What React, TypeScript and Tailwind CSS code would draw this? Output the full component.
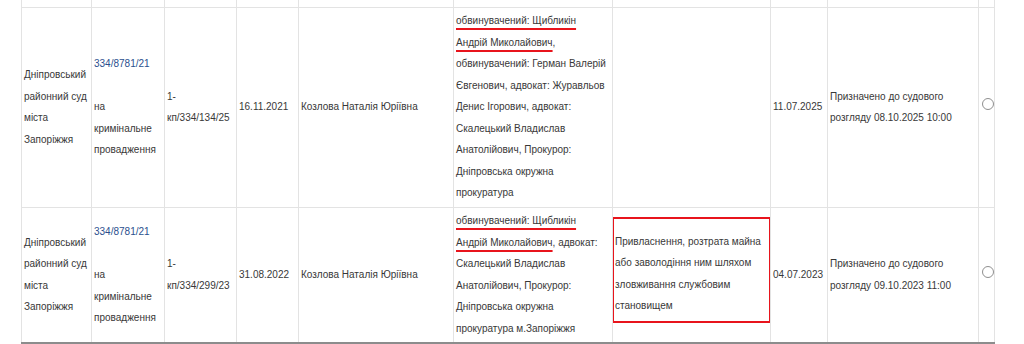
import { ReactNode } from "react";

type CaseRow = {
  court: string[];
  caseNumber: string;
  proceeding: string[];
  date: string;
  judge: string;
  parties: ReactNode;
  essence: string[] | null;
  registered: string;
  status: string[];
};

const cellCls = "border border-[#e3e3e3] align-middle px-[2px] py-0";
const markCls = "underline decoration-[#e8141c] decoration-2 underline-offset-[4px] [text-decoration-skip-ink:none]";

const rows: CaseRow[] = [
  {
    court: ["Дніпровський", "районний суд", "міста", "Запоріжжя"],
    caseNumber: "334/8781/21",
    proceeding: ["1-", "кп/334/134/25"],
    date: "16.11.2021",
    judge: "Козлова Наталія Юріївна",
    parties: (
      <>
        <span className={markCls}>обвинувачений: Щибликін</span><br/>
        <span className={markCls}>Андрій Миколайович</span>,<br/>
        обвинувачений: Герман Валерій<br/>
        Євгенович, адвокат: Журавльов<br/>
        Денис Ігорович, адвокат:<br/>
        Скалецький Владислав<br/>
        Анатолійович, Прокурор:<br/>
        Дніпровська окружна<br/>
        прокуратура
      </>
    ),
    essence: null,
    registered: "11.07.2025",
    status: ["Призначено до судового", "розгляду 08.10.2025 10:00"]
  },
  {
    court: ["Дніпровський", "районний суд", "міста", "Запоріжжя"],
    caseNumber: "334/8781/21",
    proceeding: ["1-", "кп/334/299/23"],
    date: "31.08.2022",
    judge: "Козлова Наталія Юріївна",
    parties: (
      <>
        <span className={markCls}>обвинувачений: Щибликін</span><br/>
        <span className={markCls}>Андрій Миколайович</span>, адвокат:<br/>
        Скалецький Владислав<br/>
        Анатолійович, Прокурор:<br/>
        Дніпровська окружна<br/>
        прокуратура м.Запоріжжя
      </>
    ),
    essence: ["Привласнення, розтрата майна", "або заволодіння ним шляхом", "зловживання службовим", "становищем"],
    registered: "04.07.2023",
    status: ["Призначено до судового", "розгляду 09.10.2023 11:00"]
  }
];

function Lines({lines}: {lines: string[]}) {
  return (
    <>
      {lines.map((line, i)=>(
        <span key={i}>{line}{i < lines.length - 1 && <br/>}</span>
      ))}
    </>
  );
}

export default function App() {
  const widths = [70, 73, 72, 62, 155, 159, 158, 57, 151, 16];

  return (
    <div className="w-[1024px] h-[344px] overflow-hidden bg-white font-['Liberation_Sans',Arial,sans-serif] text-[10px] leading-[21.5px] text-[#383838] whitespace-nowrap">
      <table className="ml-[21px] w-[973px] table-fixed border-collapse">
        <colgroup>
          {widths.map((w, i)=><col key={i} style={{width: w}} />)}
        </colgroup>
        <tbody>
          {/* tail of the previous row */}
          <tr className="h-[7px]">
            {widths.map((_, i)=><td key={i} className="border-x border-b border-[#e3e3e3] p-0"></td>)}
          </tr>
          {rows.map((row, r)=>{
            const last = r === rows.length - 1;
            const bottom = last ? " border-b-2 border-b-[#8c8c8c]" : "";
            return (
              <tr key={r} className={r === 0 ? "h-[200px]" : "h-[136px]"}>
                <td className={cellCls + bottom}><Lines lines={row.court} /></td>
                <td className={cellCls + bottom}>
                  <a className="text-[#2b4f8e]">{row.caseNumber}</a><br/><br/>
                  на<br/>кримінальне<br/>провадження
                </td>
                <td className={cellCls + bottom}><Lines lines={row.proceeding} /></td>
                <td className={cellCls + bottom}>{row.date}</td>
                <td className={cellCls + bottom}>{row.judge}</td>
                <td className={cellCls + bottom}>{row.parties}</td>
                {row.essence ? (
                  <td className={"border border-[#e3e3e3] align-top p-0 pt-[9px]" + bottom}>
                    <div className="-mx-[1px] border-2 border-[#e8141c] pl-[1px] pt-[12px] pb-[4px]">
                      <Lines lines={row.essence} />
                    </div>
                  </td>
                ) : (
                  <td className={cellCls + bottom}></td>
                )}
                <td className={cellCls + bottom}>{row.registered}</td>
                <td className={cellCls + bottom}><Lines lines={row.status} /></td>
                <td className={cellCls + bottom}>
                  <span className="block ml-[1px] mb-[6px] w-[12px] h-[12px] rounded-full border border-[#8f8f8f] bg-white"></span>
                </td>
              </tr>
            );
          })}
        </tbody>
      </table>
    </div>
  );
}
